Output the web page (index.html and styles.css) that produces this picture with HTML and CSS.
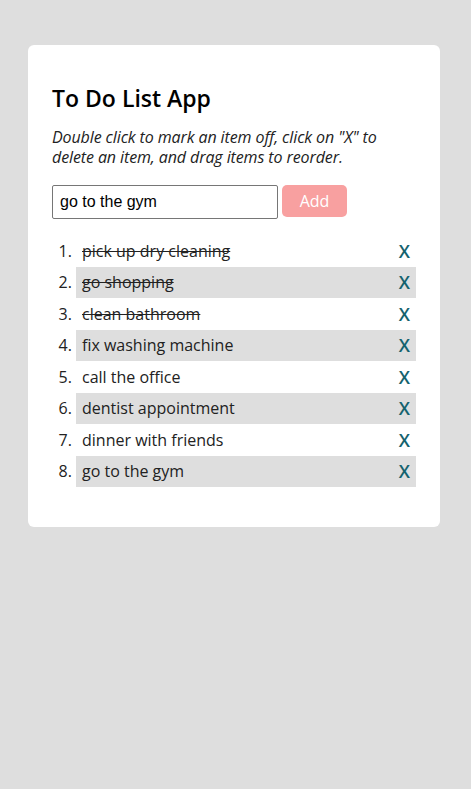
FILE: index.html
```html
<!DOCTYPE html>
<html>
<head>
<meta charset="utf-8">
<link rel="stylesheet" href="styles.css">
</head>
<body>
<div class="card">
  <h1 class="title">To Do List App</h1>
  <p class="hint">Double click to mark an item off, click on "X" to delete an item, and drag items to reorder.</p>
  <form class="add-form">
    <input class="add-input" type="text" value="go to the gym">
    <button class="add-btn" type="button">Add</button>
  </form>
  <ol class="todo-list">
    <li class="todo done"><div class="todo-row"><span class="todo-text">pick up dry cleaning</span><span class="del">X</span></div></li>
    <li class="todo done"><div class="todo-row"><span class="todo-text">go shopping</span><span class="del">X</span></div></li>
    <li class="todo done"><div class="todo-row"><span class="todo-text">clean bathroom</span><span class="del">X</span></div></li>
    <li class="todo"><div class="todo-row"><span class="todo-text">fix washing machine</span><span class="del">X</span></div></li>
    <li class="todo"><div class="todo-row"><span class="todo-text">call the office</span><span class="del">X</span></div></li>
    <li class="todo"><div class="todo-row"><span class="todo-text">dentist appointment</span><span class="del">X</span></div></li>
    <li class="todo"><div class="todo-row"><span class="todo-text">dinner with friends</span><span class="del">X</span></div></li>
    <li class="todo"><div class="todo-row"><span class="todo-text">go to the gym</span><span class="del">X</span></div></li>
  </ol>
</div>
</body>
</html>
```
FILE: styles.css
```css
html, body {
  margin: 0;
  padding: 0;
  background: #dedede;
}
body {
  padding: 45px 0 0 28px;
  font-family: "Open Sans", sans-serif;
  color: #111;
}
.card {
  width: 412px;
  box-sizing: border-box;
  background: #fff;
  border-radius: 6px;
  padding: 24px;
}
.title {
  font-size: 23px;
  font-weight: 600;
  margin: 13px 0 12px;
  line-height: 33px;
  color: #000;
}
.hint {
  font-style: italic;
  font-size: 16px;
  line-height: 20px;
  margin: 0 0 18px;
  color: #222;
  letter-spacing: -0.1px;
}
.add-form {
  display: flex;
  align-items: flex-start;
  gap: 4px;
}
.add-input {
  width: 226px;
  height: 34px;
  box-sizing: border-box;
  border: 1px solid #767676;
  border-radius: 2px;
  font-family: "Liberation Sans", Arial, sans-serif;
  font-size: 16px;
  padding: 0 7px;
  margin: 0;
  color: #000;
}
.add-btn {
  width: 65px;
  height: 32px;
  border: none;
  border-radius: 5px;
  background: #f8a0a0;
  color: #fff;
  font-family: "Open Sans", sans-serif;
  font-size: 16px;
  margin: 0;
  padding: 0;
}
.todo-list {
  margin: 16px 0 16px;
  padding-left: 24px;
  font-size: 16px;
}
.todo {
  color: #222;
}
.todo:nth-child(even) {
  background: #dedede;
}
.todo-row {
  display: flex;
  justify-content: space-between;
  align-items: center;
  height: 31.5px;
  padding: 0 6px;
}
.done .todo-text {
  text-decoration: line-through;
}
.del {
  color: #14626e;
  font-size: 18px;
  font-weight: 600;
}
```
